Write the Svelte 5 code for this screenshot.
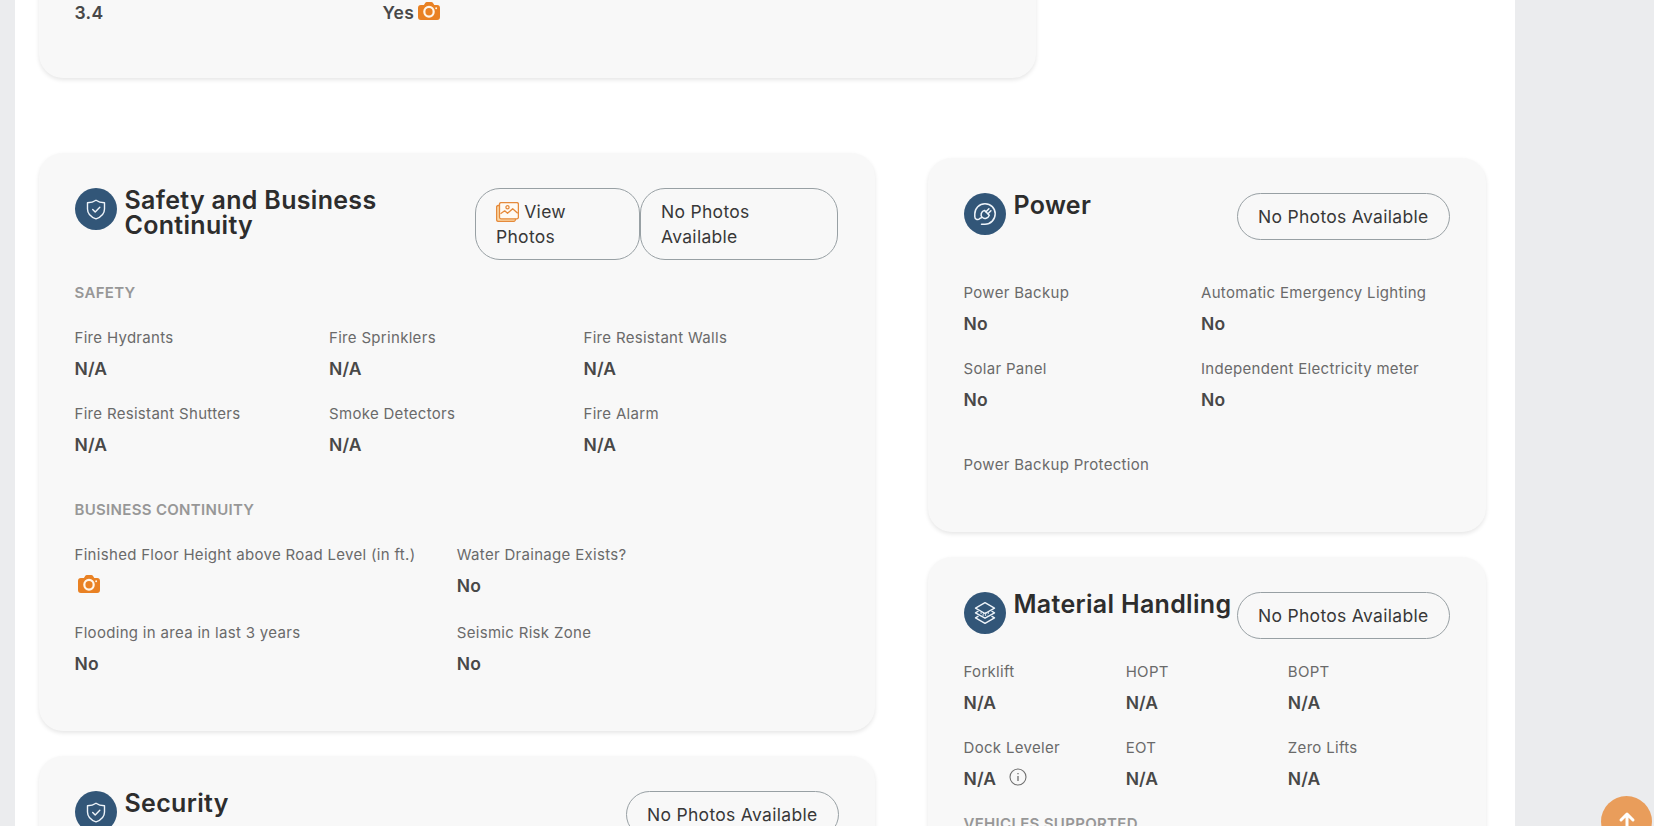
<script>
  const safety = [
    ['Fire Hydrants', 'N/A'],
    ['Fire Sprinklers', 'N/A'],
    ['Fire Resistant Walls', 'N/A'],
    ['Fire Resistant Shutters', 'N/A'],
    ['Smoke Detectors', 'N/A'],
    ['Fire Alarm', 'N/A'],
  ];
  const continuity = [
    ['Finished Floor Height above Road Level (in ft.)', null],
    ['Water Drainage Exists?', 'No'],
    ['Flooding in area in last 3 years', 'No'],
    ['Seismic Risk Zone', 'No'],
  ];
  const power = [
    ['Power Backup', 'No'],
    ['Automatic Emergency Lighting', 'No'],
    ['Solar Panel', 'No'],
    ['Independent Electricity meter', 'No'],
  ];
  const handling = [
    ['Forklift', 'N/A'],
    ['HOPT', 'N/A'],
    ['BOPT', 'N/A'],
    ['Dock Leveler', 'N/A', true],
    ['EOT', 'N/A'],
    ['Zero Lifts', 'N/A'],
  ];
</script>

{#snippet camera()}
  <svg class="camera" width="22" height="18" viewBox="0 0 23 18" preserveAspectRatio="none">
    <path fill="#e98123" d="M3 3h3.200l1.300-2Q8.100 0 9.300 0h4.600q1.200 0 1.800 1l1.300 2H20q3 0 3 3v9q0 3-3 3H3q-3 0-3-3V6q0-3 3-3Z" />
    <circle cx="11.500" cy="9.800" r="4.900" fill="none" stroke="#fff6ea" stroke-width="2.300" />
    <circle cx="19" cy="6.200" r="1" fill="#fff6ea" />
  </svg>
{/snippet}

{#snippet shield()}
  <span class="badge">
    <svg width="42" height="42" viewBox="0 0 42 42" fill="none" stroke="#eef4fa" stroke-width="1.400" stroke-linecap="round" stroke-linejoin="round">
      <path d="M21 12.300c2.400 1.700 5.300 2.400 8.500 2.500v6.200c0 4.900-3.300 8-8.500 9.900-5.200-1.900-8.500-5-8.500-9.900v-6.200c3.200-.1 6.100-.8 8.500-2.500Z" />
      <path d="m17.700 21.400 2.500 2.500 4.600-4.600" />
    </svg>
  </span>
{/snippet}

{#snippet fields(items, kind)}
  <div class="fields {kind}">
    {#each items as [label, value, info]}
      <div class="field">
        <div class="label">{label}</div>
        <div class="value">
          {#if value}{value}{:else}<span class="lone">{@render camera()}</span>{/if}
          {#if info}
            <svg class="info" width="18" height="18" viewBox="0 0 18 18" fill="none" stroke="#6f6f6f">
              <circle cx="9" cy="9" r="8" stroke-width="1.100" />
              <path d="M9 8v5M9 5v1.300" stroke-width="1.300" />
            </svg>
          {/if}
        </div>
      </div>
    {/each}
  </div>
{/snippet}

<main class="page">
  <section class="card summary">
    <div class="value">3.4</div>
    <div class="value">Yes{@render camera()}</div>
  </section>

  <div class="columns">
    <div class="col left">
      <section class="card safety">
        <header>
          {@render shield()}
          <h2>Safety and Business Continuity</h2>
          <div class="buttons">
            <button class="view"><svg class="photos" width="23" height="20" viewBox="0 0 23 20" fill="none" stroke="#e58a3b" stroke-width="1.300" stroke-linejoin="round">
                <path fill="#fbd9a8" d="M3.500 3.500H2.200Q.6 3.500.6 5v12.500q0 1.900 1.900 1.900h15.200q1.600 0 2-2.400Z" />
                <rect x="3.500" y=".6" width="18.900" height="16.200" rx="1.600" fill="#fffaf3" />
                <circle cx="11.500" cy="5.300" r="1.600" />
                <path d="m4.500 11.800 4.200-3 2.800 2.500 5.200-4.500 5 4.500" />
              </svg> View Photos</button>
            <button class="none">No Photos Available</button>
          </div>
        </header>
        <h3>SAFETY</h3>
        {@render fields(safety, 'three')}
        <h3 class="second">BUSINESS CONTINUITY</h3>
        {@render fields(continuity, 'two')}
      </section>

      <section class="card">
        <header>
          {@render shield()}
          <h2>Security</h2>
          <button>No Photos Available</button>
        </header>
      </section>
    </div>

    <div class="col right">
      <section class="card power">
        <header>
          <span class="badge">
            <svg width="42" height="42" viewBox="0 0 42 42" fill="none" stroke="#eef4fa" stroke-width="1.500" stroke-linecap="round" stroke-linejoin="round">
              <path d="M17.500 31.200h3.500c5.800 0 10.200-4.700 10.200-10.400S26.800 10.700 21 10.700 10.800 15.200 10.800 21v2.700c0 3.200 3.600 3.400 4.700 2 .6-.8 1.200-.9 2-1" />
              <path d="m20.500 17.400 4.800 4.800c-1.200 3-4.800 4.300-7.100 2.100-2.200-2.200-1-5.900 2.300-6.900Z" />
              <path d="m22 18.800 2.900-3.100M24 20.700l2.900-2.900" />
            </svg>
          </span>
          <h2>Power</h2>
          <button>No Photos Available</button>
        </header>
        {@render fields(power, 'pair')}
        <div class="label last">Power Backup Protection</div>
      </section>

      <section class="card handling">
        <header>
          <span class="badge">
            <svg width="42" height="42" viewBox="0 0 42 42" fill="none" stroke="#eef4fa" stroke-width="1.400" stroke-linejoin="round">
              <path d="m21 10.700 9.500 5.400-9.500 5.400-9.500-5.400Z" />
              <path d="m14.500 19-3 1.800 9.500 5.400 9.500-5.400-3-1.800" />
              <path d="m14.500 24.100-3 1.800 9.500 5.400 9.500-5.400-3-1.800" />
              <path d="M16.500 21h9M18.500 23h5" stroke-dasharray="1.200 1.200" />
            </svg>
          </span>
          <h2>Material Handling</h2>
          <button>No Photos Available</button>
        </header>
        {@render fields(handling, 'three')}
        <h3>VEHICLES SUPPORTED</h3>
      </section>
    </div>
  </div>
</main>

<button class="to-top" aria-label="Back to top">
  <svg width="20" height="24" viewBox="0 0 20 24" fill="none" stroke="#fff" stroke-width="3" stroke-linecap="round" stroke-linejoin="round">
    <path d="M10 22V3M4 9l6-6 6 6" />
  </svg>
</button>

<style>
  :global(body) {
    background: #ebecee;
    overflow: hidden;
  }
  .page {
    box-sizing: border-box;
    width: 1500px;
    height: 826px;
    margin-left: 15px;
    padding-left: 24px;
    overflow: hidden;
    background: #fff;
    font-family: Inter, sans-serif;
    letter-spacing: 0.31px;
  }
  .card {
    box-sizing: border-box;
    padding: 35px 36px;
    border-radius: 24px;
    background: #f8f8f8;
    box-shadow: 0 2px 4px rgba(0, 0, 0, 0.1);
  }
  .summary {
    display: grid;
    grid-template-columns: 308px 1fr;
    width: 997px;
    height: 118px;
    margin-top: -40px;
    padding: 40px 0 0 35.500px;
  }
  .columns {
    display: flex;
    align-items: flex-start;
    gap: 53px;
    margin-top: 75px;
  }
  .col {
    display: flex;
    flex-direction: column;
  }
  .left {
    width: 836px;
    gap: 25px;
  }
  .left .card {
    padding-left: 35.500px;
  }
  .left .three {
    margin-right: 1px;
  }
  .right {
    width: 558px;
    gap: 25px;
    padding-top: 5px;
  }
  .right .card {
    padding-left: 35.500px;
  }
  header {
    display: flex;
    align-items: flex-start;
  }
  .badge {
    flex: none;
    width: 42px;
    height: 42px;
    margin-right: 8px;
    border-radius: 50%;
    background: #325678;
  }
  .badge svg {
    display: block;
  }
  h2 {
    flex: 1;
    margin: 0;
    color: #2d2d2d;
    font-size: 25px;
    font-weight: 600;
    line-height: 25px;
    letter-spacing: 0.31px;
    white-space: nowrap;
  }
  .safety h2 {
    white-space: normal;
  }
  .buttons {
    display: flex;
    flex: none;
    margin-right: 1px;
  }
  button {
    box-sizing: border-box;
    flex: none;
    width: 213px;
    padding: 10px 20px;
    border: 1px solid #98a0a4;
    border-radius: 25px;
    background: transparent;
    color: #383838;
    font: 400 17.500px/25px Inter, sans-serif;
    letter-spacing: 0.3px;
    text-align: left;
    white-space: nowrap;
  }
  .view,
  .none {
    width: 165px;
    white-space: normal;
  }
  .none {
    width: 198px;
  }
  .photos {
    vertical-align: -4px;
  }
  h3 {
    margin: 21px 0 21px;
    color: #979797;
    font-size: 15px;
    font-weight: 600;
    line-height: 24px;
  }
  .second {
    margin-top: 42px;
    margin-bottom: 21px;
  }
  .fields {
    display: grid;
    row-gap: 22px;
  }
  .three {
    grid-template-columns: repeat(3, 1fr);
  }
  .two {
    grid-template-columns: repeat(2, 1fr);
    row-gap: 24px;
  }
  .pair {
    grid-template-columns: 237.500px 1fr;
  }
  .label {
    color: #6a6a6a;
    font-size: 15px;
    line-height: 24px;
    white-space: nowrap;
  }
  .value {
    display: flex;
    align-items: center;
    height: 24px;
    color: #484848;
    font-size: 17.500px;
    font-weight: 600;
    letter-spacing: 0.1px;
  }
  .summary .value {
    letter-spacing: 0.3px;
  }
  .field .value {
    margin-top: 6px;
  }
  .camera {
    margin: 0 0 2px 4px;
  }
  .lone {
    display: flex;
    margin-left: -1px;
  }
  .info {
    margin: 0 0 3px 13px;
  }
  .safety {
    height: 578px;
  }
  .power {
    height: 374px;
  }
  .power .fields {
    margin-top: 41px;
  }
  .last {
    margin-top: 42px;
  }
  .handling .fields {
    margin-top: 21px;
  }
  .handling h3 {
    margin-top: 22px;
  }
  .to-top {
    position: fixed;
    top: 796px;
    left: 1601px;
    display: flex;
    justify-content: center;
    width: 51px;
    height: 51px;
    padding: 15px 0 0;
    border: 0;
    border-radius: 50%;
    background: #e99d5b;
  }
</style>
